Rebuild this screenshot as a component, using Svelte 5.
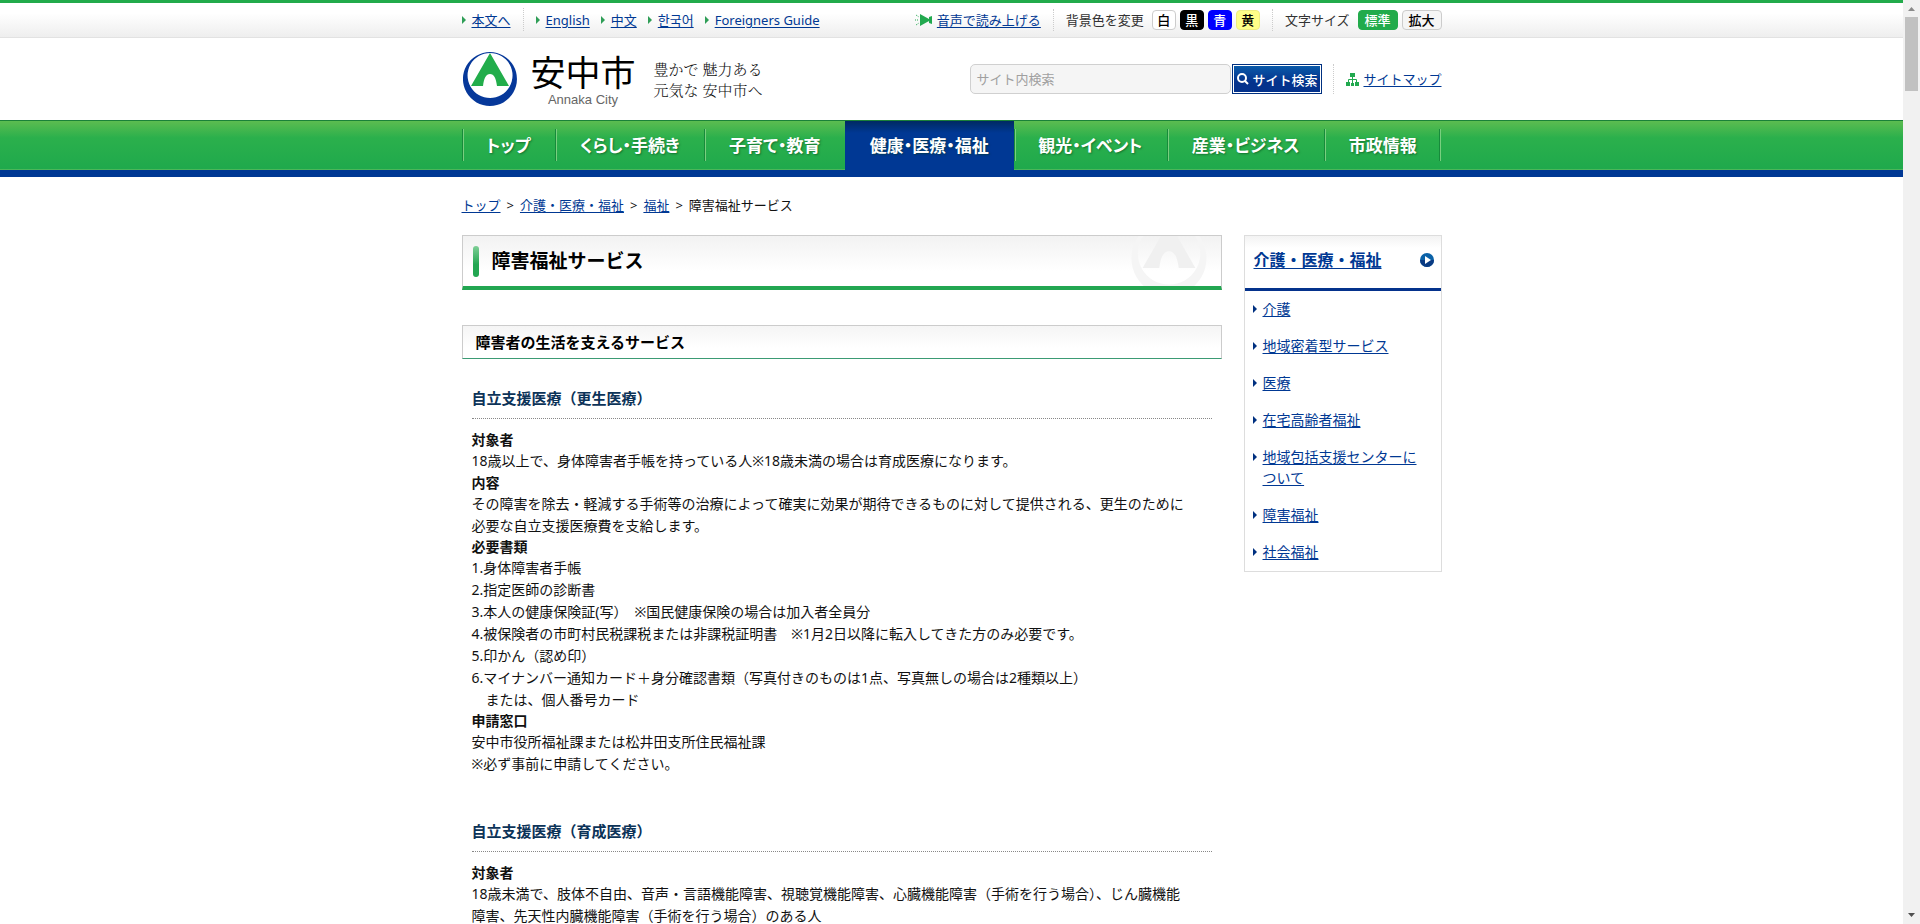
<script>
  const languages = [
    { label: 'English', lang: 'en' },
    { label: '中文', lang: 'zh' },
    { label: '한국어', lang: 'ko' },
    { label: 'Foreigners Guide', lang: 'en' }
  ];
  const colors = [
    { label: '白', name: 'white' },
    { label: '黒', name: 'black' },
    { label: '青', name: 'blue' },
    { label: '黄', name: 'yellow' }
  ];
  const nav = ['トップ', 'くらし・手続き', '子育て・教育', '健康・医療・福祉', '観光・イベント', '産業・ビジネス', '市政情報'];
  const activeNav = 3;
  const crumbs = ['トップ', '介護・医療・福祉', '福祉'];
  const sideLinks = ['介護', '地域密着型サービス', '医療', '在宅高齢者福祉', '地域包括支援センターについて', '障害福祉', '社会福祉'];
  const sections = [
    {
      title: '自立支援医療（更生医療）',
      items: [
        { term: '対象者', lines: ['18歳以上で、身体障害者手帳を持っている人※18歳未満の場合は育成医療になります。'] },
        {
          term: '内容',
          lines: [
            'その障害を除去・軽減する手術等の治療によって確実に効果が期待できるものに対して提供される、更生のために',
            '必要な自立支援医療費を支給します。'
          ]
        },
        {
          term: '必要書類',
          lines: [
            '1.身体障害者手帳',
            '2.指定医師の診断書',
            '3.本人の健康保険証(写）　※国民健康保険の場合は加入者全員分',
            '4.被保険者の市町村民税課税または非課税証明書　※1月2日以降に転入してきた方のみ必要です。',
            '5.印かん（認め印）',
            '6.マイナンバー通知カード＋身分確認書類（写真付きのものは1点、写真無しの場合は2種類以上）',
            '　または、個人番号カード'
          ]
        },
        { term: '申請窓口', lines: ['安中市役所福祉課または松井田支所住民福祉課', '※必ず事前に申請してください。'] }
      ]
    },
    {
      title: '自立支援医療（育成医療）',
      items: [
        {
          term: '対象者',
          lines: [
            '18歳未満で、肢体不自由、音声・言語機能障害、視聴覚機能障害、心臓機能障害（手術を行う場合）、じん臓機能',
            '障害、先天性内臓機能障害（手術を行う場合）のある人'
          ]
        }
      ]
    }
  ];
</script>

{#snippet emblem(ring, mark)}
  <path fill={ring} fill-rule="evenodd" d="M27 0A27 27 0 1 1 26.9 0ZM27 1A22.5 22.5 0 1 0 27.1 1Z" />
  <path fill={mark} d="M27 1 46 34H34C33 26 31 22 27 22S21 26 20 34H8Z" />
{/snippet}

<div class="window">
  <div class="page">
    <div class="utility">
      <div class="wrap utility-row">
        <a class="arrow green" href="#main">本文へ</a>
        <ul class="languages">
          {#each languages as item}
            <li><a class="arrow green" href="#{item.lang}" lang={item.lang}>{item.label}</a></li>
          {/each}
        </ul>
        <a class="voice" href="#voice">
          <svg width="18" height="14" viewBox="0 0 18 14" aria-hidden="true">
            <path fill="#22a94f" d="M5 1 14 6V8L5 13ZM14 4 17 3V11L14 10Z" />
            <path stroke="#22a94f" stroke-dasharray="1 1" d="M0 7H4M1 2 4 4M1 12 4 10" />
          </svg><span>音声で読み上げる</span>
        </a>
        <div class="choices">
          <span class="caption">背景色を変更</span>
          {#each colors as color}
            <button class="chip {color.name}" type="button">{color.label}</button>
          {/each}
        </div>
        <div class="choices">
          <span class="caption">文字サイズ</span>
          <button class="chip wide current" type="button">標準</button>
          <button class="chip wide" type="button">拡大</button>
        </div>
      </div>
    </div>

    <header class="wrap masthead">
      <svg width="54" height="54" viewBox="0 0 54 54" aria-hidden="true">
        {@render emblem('#06389a', '#22ad4b')}
      </svg>
      <div class="brand">
        <span class="city">安中市</span>
        <span class="roman">Annaka City</span>
      </div>
      <p class="tagline">豊かで 魅力ある<br />元気な 安中市へ</p>
      <form class="search" role="search">
        <input type="text" placeholder="サイト内検索" aria-label="サイト内検索" />
        <button type="button">
          <svg width="12" height="12" viewBox="0 0 12 12" aria-hidden="true">
            <circle cx="5" cy="5" r="4" fill="none" stroke="#fff" stroke-width="2" />
            <path d="M8 8 11 11" stroke="#fff" stroke-width="2" />
          </svg>サイト検索
        </button>
      </form>
      <a class="sitemap" href="#sitemap">
        <svg width="13" height="13" viewBox="0 0 13 13" aria-hidden="true">
          <path fill="#22a94f" d="M4 0H9V4H4ZM0 9H4V13H0ZM9 9H13V13H9ZM5 10H8V13H5Z" />
          <path fill="none" stroke="#22a94f" d="M6.5 4V10M2.5 9V6.5H10.500V9" />
        </svg><span>サイトマップ</span>
      </a>
    </header>

    <nav class="global" aria-label="グローバルメニュー">
      <ul class="wrap">
        {#each nav as label, i}
          <li class:active={i === activeNav}><a href="#nav{i}">{label}</a></li>
        {/each}
      </ul>
    </nav>

    <div class="wrap">
      <div class="crumbs">
        {#each crumbs as crumb}<a href="#crumb">{crumb}</a><span>&gt;</span>{/each}<span>障害福祉サービス</span>
      </div>

      <div class="columns">
        <main id="main">
          <h1>
            <span>障害福祉サービス</span>
            <svg width="76" height="50" viewBox="0 11 54 36" aria-hidden="true">
              {@render emblem('#f5f5f5', '#f0f0f0')}
            </svg>
          </h1>
          <h2>障害者の生活を支えるサービス</h2>
          {#each sections as section}
            <section>
              <h3>{section.title}</h3>
              <dl>
                {#each section.items as item}
                  <dt>{item.term}</dt>
                  <dd>{#each item.lines as line}<div>{line}</div>{/each}</dd>
                {/each}
              </dl>
            </section>
          {/each}
        </main>

        <aside>
          <div class="side-title">
            <a href="#category">介護・医療・福祉</a>
            <svg width="14" height="14" viewBox="0 0 14 14" aria-hidden="true">
              <circle cx="7" cy="7" r="7" fill="#0b62a8" />
              <path fill="#0a3b83" d="M0 7A7 7 0 0 0 14 7Z" />
              <path fill="#fff" d="M5 3 11 7 5 11Z" />
            </svg>
          </div>
          <ul>
            {#each sideLinks as label}
              <li><a class="arrow" href="#side"><span>{label}</span></a></li>
            {/each}
          </ul>
        </aside>
      </div>
    </div>
  </div>

  <div class="scrollbar" aria-hidden="true">
    <svg width="17" height="17" viewBox="0 0 17 17"><path fill="#8a8a8a" d="M5 11 8.500 7 12 11Z" /></svg>
    <div class="thumb"></div>
    <svg width="17" height="17" viewBox="0 0 17 17"><path fill="#505050" d="M5 6 8.500 10 12 6Z" /></svg>
  </div>
</div>

<style>
  :global(body) {
    background: #fff;
    color: #111;
    font-family: 'Noto Sans', 'Noto Sans CJK JP', sans-serif;
    font-size: 14px;
    line-height: 22px;
  }
  * { box-sizing: border-box; }
  ul, dl, dd, p, h1, h2, h3 { margin: 0; padding: 0; }
  ul { list-style: none; }
  svg { flex: none; display: block; }
  a { color: #003893; text-decoration: underline; text-underline-offset: 2px; }
  button, input { font-family: inherit; margin: 0; }

  .window { display: flex; height: 100vh; overflow: hidden; }
  .page { flex: 1; min-width: 0; overflow: hidden; }
  .wrap { max-width: 980px; margin: 0 auto; }

  .arrow { display: inline-flex; gap: 5px; align-items: center; }
  .arrow::before {
    content: '';
    flex: none;
    border: 4px solid transparent;
    border-right-width: 0;
    border-left-color: #003080;
  }
  .arrow.green { gap: 6px; }
  .arrow.green::before { border-left-color: #2f9e57; }

  .utility {
    border-top: 3px solid #22ab4b;
    border-bottom: 1px solid #e2e2e2;
    background: linear-gradient(#fff 30%, #eee);
  }
  .utility-row { display: flex; align-items: center; height: 34px; padding-bottom: 1px; font-size: 13px; }
  .languages {
    display: flex;
    gap: 11px;
    margin: 0 auto 0 12px;
    padding-left: 12px;
    border-left: 1px dotted #ccc;
  }
  .voice { display: flex; align-items: center; gap: 4px; text-decoration: none; }
  .voice span { text-decoration: underline; }
  .choices {
    display: flex;
    align-items: center;
    gap: 4px;
    margin-left: 12px;
    padding-left: 12px;
    border-left: 1px dotted #ccc;
  }
  .caption { margin-right: 4px; color: #333; }
  .chip {
    width: 24px;
    height: 20px;
    padding: 0;
    border: 1px solid #ccc;
    border-radius: 4px;
    background: #fff;
    color: #000;
    font-size: 13px;
    font-weight: 500;
    line-height: 18px;
  }
  .chip.wide { width: 40px; background: #f5f5f5; }
  .chip.black { background: #000; border-color: #000; color: #fff; }
  .chip.blue { background: #00f; border-color: #00f; color: #fff; }
  .chip.yellow { background: #ff8; border-color: #eeee80; }
  .chip.wide.current { background: #22ab4b; border-color: #22ab4b; color: #fff; }

  .masthead { display: flex; align-items: center; height: 82px; padding-left: 1px; }
  .brand { display: flex; flex-direction: column; align-items: center; margin: 0 18px 0 14px; }
  .city { color: #000; font-size: 35px; font-weight: 400; line-height: 42px; }
  .roman { color: #666; font-family: 'Liberation Sans', sans-serif; font-size: 13px; line-height: 12px; }
  .tagline {
    color: #111;
    font-family: 'Noto Serif CJK JP', 'Noto Sans CJK JP', serif;
    font-size: 15px;
    font-weight: 300;
    line-height: 21px;
  }
  .search { display: flex; gap: 1px; margin-left: auto; }
  .search input {
    width: 261px;
    height: 30px;
    padding: 0 5px;
    border: 1px solid #d0d0d0;
    border-radius: 5px;
    background: #f5f5f5;
    font-size: 13px;
  }
  .search input::placeholder { color: #a0a0a0; }
  .search button {
    display: flex;
    align-items: center;
    justify-content: center;
    gap: 3px;
    width: 90px;
    height: 30px;
    padding: 0;
    border: 1px solid #003080;
    background: linear-gradient(#0a5cab, #04328c 60%);
    box-shadow: inset 0 0 0 1px #fff;
    color: #fff;
    font-size: 13px;
    font-weight: 500;
  }
  .sitemap {
    display: flex;
    align-items: center;
    gap: 4px;
    height: 30px;
    margin-left: 11px;
    padding-left: 12px;
    border-left: 1px dotted #ccc;
    font-size: 13px;
    text-decoration: none;
  }
  .sitemap span { text-decoration: underline; }

  .global {
    border-top: 1px solid #1a8138;
    background: linear-gradient(#5cbc50, #2bb04c 30%, #1fa94c 48px, #4bb65a 48px, #4bb65a 49px, #003894 49px);
  }
  .global ul { display: flex; height: 56px; }
  .global li { position: relative; flex: 1 1 auto; }
  .global li::before, .global li:last-child::after {
    content: '';
    position: absolute;
    top: 8px;
    left: 0;
    width: 2px;
    height: 32px;
    background: linear-gradient(90deg, #178a3b 50%, #79cf7f 50%);
  }
  .global li:last-child::after { left: auto; right: 0; }
  .global a {
    display: block;
    height: 56px;
    padding: 0 20px;
    color: #fff;
    font-feature-settings: 'palt';
    font-family: 'Noto Sans CJK JP', sans-serif;
    font-size: 17px;
    font-weight: 700;
    line-height: 47px;
    text-align: center;
    text-decoration: none;
    text-shadow: 1px 1px 2px rgba(0, 60, 20, 0.5);
    white-space: nowrap;
  }
  .global .active { background: linear-gradient(#002a62, #003894 12px); }
  .global .active::before { display: none; }

  .crumbs { display: flex; gap: 6px; padding: 17px 0 19px; font-size: 13px; }

  .columns { display: flex; align-items: flex-start; gap: 22px; }
  main { flex: 1; min-width: 0; }
  h1 {
    display: flex;
    align-items: center;
    height: 55px;
    padding: 0 14px 0 10px;
    border: 1px solid #ccc;
    border-bottom: 4px solid #22a651;
    background: linear-gradient(#f2f2f2, #fff 70%);
    color: #000;
    font-size: 19px;
  }
  h1::before {
    content: '';
    width: 6px;
    height: 31px;
    margin-right: 13px;
    border-radius: 3px;
    background: linear-gradient(#7fcf97, #22a651 60%);
  }
  h1 svg { margin-left: auto; }
  h2 {
    margin-top: 35px;
    padding: 5px 13px;
    border: 1px solid #ccc;
    border-bottom-color: #3b9b74;
    background: linear-gradient(#f5f5f5, #fff 70%);
    color: #000;
    font-size: 15px;
  }
  section { padding: 28px 10px 18px; }
  h3 {
    padding-bottom: 9px;
    border-bottom: 1px dotted #888;
    color: #0c3358;
    font-size: 15px;
  }
  dl { padding-top: 11px; }
  dt { font-weight: 700; line-height: 21px; }
  dt:first-child { line-height: 20px; }
  dd div { white-space: nowrap; }
  dt ~ dd div:last-child:not(:only-child) { line-height: 21px; }

  aside { width: 198px; border: 1px solid #ddd; }
  .side-title {
    display: flex;
    justify-content: space-between;
    align-items: center;
    height: 55px;
    padding: 0 7px 5px 9px;
    border-bottom: 3px solid #04328c;
    background: linear-gradient(#f3f3f3, #fff 12px);
    font-size: 16px;
    font-weight: 700;
  }
  aside ul { padding: 7px 16px 9px 8px; }
  aside li { padding-bottom: 16px; line-height: 21px; }
  aside li:last-child { padding-bottom: 0; }
  aside .arrow { display: flex; align-items: flex-start; gap: 6px; }
  aside .arrow::before { margin-top: 7px; }

  .scrollbar {
    display: flex;
    flex-direction: column;
    width: 17px;
    background: #f1f1f1;
  }
  .thumb { width: 13px; height: 74px; margin: 0 2px auto; background: #c1c1c1; }
</style>
